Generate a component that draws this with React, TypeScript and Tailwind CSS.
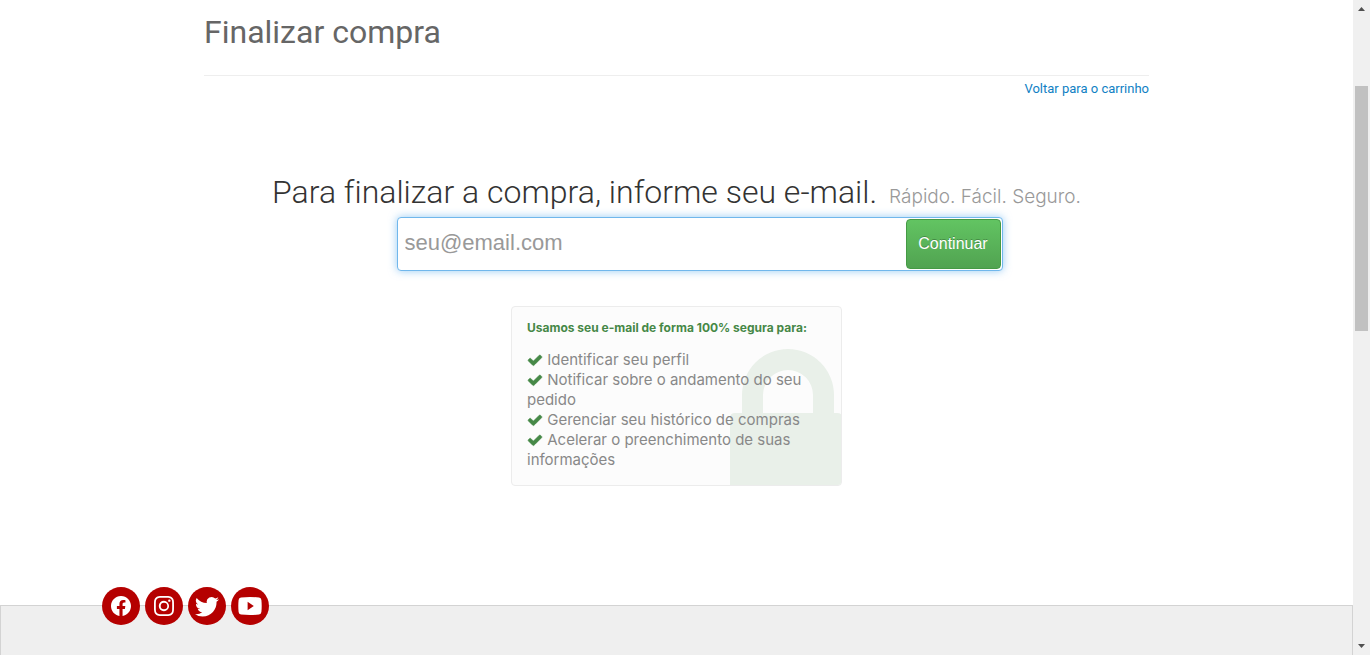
import { BsFacebook, BsInstagram, BsTwitter } from "react-icons/bs";
import type { ReactNode } from "react";

const benefits = [
  "Identificar seu perfil",
  "Notificar sobre o andamento do seu pedido",
  "Gerenciar seu histórico de compras",
  "Acelerar o preenchimento de suas informações",
];

function CheckIcon() {
  return (
    <svg viewBox="0 0 1792 1792" className="inline-block size-4 align-[-3px]" fill="#468847" stroke="#468847" strokeWidth="60" aria-hidden="true">
      <path d="M1671 566q0 40-28 68l-724 724-136 136q-28 28-68 28t-68-28l-136-136-362-362q-28-28-28-68t28-68l136-136q28-28 68-28t68 28l294 295 656-657q28-28 68-28t68 28l136 136q28 28 28 68z" />
    </svg>
  );
}

function LockIcon() {
  return (
    <svg
      viewBox="0 0 112 137"
      className="pointer-events-none absolute -right-px -bottom-px h-[137px] w-[112px]"
      fill="#e9f0e9"
      aria-hidden="true"
    >
      <path d="M12 64V46a46 46 0 0 1 92 0v18h3q5 0 5 4v69H0V69q0-5 5-5zM33 64h50V46a25 25 0 0 0-50 0z" />
    </svg>
  );
}

function YoutubeIcon() {
  return (
    <svg viewBox="0 0 24 18" className="h-[18px] w-6" aria-hidden="true">
      <path fill="#fff" d="M3 .4Q12-.4 21 .4 23.200.6 23.400 3 24 9 23.400 15 23.200 17.400 21 17.600 12 18.400 3 17.600.8 17.400.6 15 0 9 .6 3 .8.6 3 .4z" />
      <path fill="#b50000" d="M9.600 4.800v8.400L15.800 9z" />
    </svg>
  );
}

function SocialLink({ label, children }: { label: string; children: ReactNode }) {
  return (
    <a href="#" aria-label={label} className="flex size-[38px] items-center justify-center rounded-full bg-[#b50000] text-white">
      {children}
    </a>
  );
}

function Scrollbar() {
  return (
    <div className="flex w-[17px] shrink-0 flex-col items-center bg-[#f0f0f0]" aria-hidden="true">
      <svg viewBox="0 0 17 17" className="size-[17px]" fill="#505050">
        <path d="M5 11h7L8.500 7z" />
      </svg>
      <div className="grow-[69]" />
      <div className="w-[13px] grow-[245] bg-[#c1c1c1]" />
      <div className="grow-[307]" />
      <svg viewBox="0 0 17 17" className="size-[17px]" fill="#505050">
        <path d="M5 6h7l-3.500 4z" />
      </svg>
    </div>
  );
}

export default function App() {
  return (
    <div className="flex h-screen overflow-hidden bg-white font-['Inter',sans-serif]">
      <div className="flex min-w-0 flex-1 flex-col">
        <main className="mx-auto w-full max-w-[945px] flex-1">
          <h1 className="border-b border-[#eee] pt-3 pb-[23px] font-['Roboto',sans-serif] text-[32px] leading-10 text-[#666]">
            Finalizar compra
          </h1>
          <div className="flex justify-end pt-[3px]">
            <a href="#" className="font-['Roboto',sans-serif] text-[13px] leading-5 text-[#0f7fc4]">
              Voltar para o carrinho
            </a>
          </div>

          <div className="flex items-baseline justify-center gap-3 pt-[73px] whitespace-nowrap">
            <h2 className="font-['Roboto',sans-serif] text-[32px] leading-10 font-light text-[#333] [font-variant-ligatures:none]">
              <label htmlFor="email">Para finalizar a compra, informe seu e-mail.</label>
            </h2>
            <small className="text-[19px] leading-5 font-light text-[#999]">Rápido. Fácil. Seguro.</small>
          </div>

          <form
            className="mx-auto mt-[5px] w-full max-w-[652px] pl-[46px] font-['Liberation_Sans',sans-serif]"
            onSubmit={(e) => e.preventDefault()}
          >
            <div className="flex h-[54px] rounded-[4px] border border-[#70b7ec] bg-white p-px shadow-[0_0_8px_rgba(82,168,236,0.6)]">
              <input
                id="email"
                type="email"
                placeholder="seu@email.com"
                className="min-w-0 flex-1 px-[6px] pb-[3px] text-[22px] text-[#555] outline-none placeholder:text-[#999]"
              />
              <button
                type="submit"
                className="w-[95px] rounded-[4px] border border-[#459a45] bg-linear-to-b from-[#62c462] to-[#51a351] text-base text-white [text-shadow:0_-1px_0_rgba(0,0,0,0.25)]"
              >
                Continuar
              </button>
            </div>
          </form>

          <section className="relative mx-auto mt-[35px] w-full max-w-[331px] overflow-hidden rounded-[4px] border border-[#ececec] bg-[#fcfcfc] px-[15px] pt-[11px] pb-[15px]">
            <LockIcon />
            <h3 className="relative text-[12px] leading-5 font-bold text-[#468847]">
              Usamos seu e-mail de forma 100% segura para:
            </h3>
            <ul className="relative mt-3 text-[15px] leading-5 text-[#888]">
              {benefits.map((text) => (
                <li key={text}>
                  <CheckIcon /> {text}
                </li>
              ))}
            </ul>
          </section>
        </main>

        <footer className="h-[50px] shrink-0 border border-b-0 border-[#d3d3d3] bg-[#efefef]">
          <div className="mx-auto -mt-[19px] flex w-full max-w-[1149px] gap-[5px]">
            <SocialLink label="Facebook">
              <BsFacebook size={20} />
            </SocialLink>
            <SocialLink label="Instagram">
              <BsInstagram size={20} />
            </SocialLink>
            <SocialLink label="Twitter">
              <BsTwitter size={24} />
            </SocialLink>
            <SocialLink label="YouTube">
              <YoutubeIcon />
            </SocialLink>
          </div>
        </footer>
      </div>
      <Scrollbar />
    </div>
  );
}
